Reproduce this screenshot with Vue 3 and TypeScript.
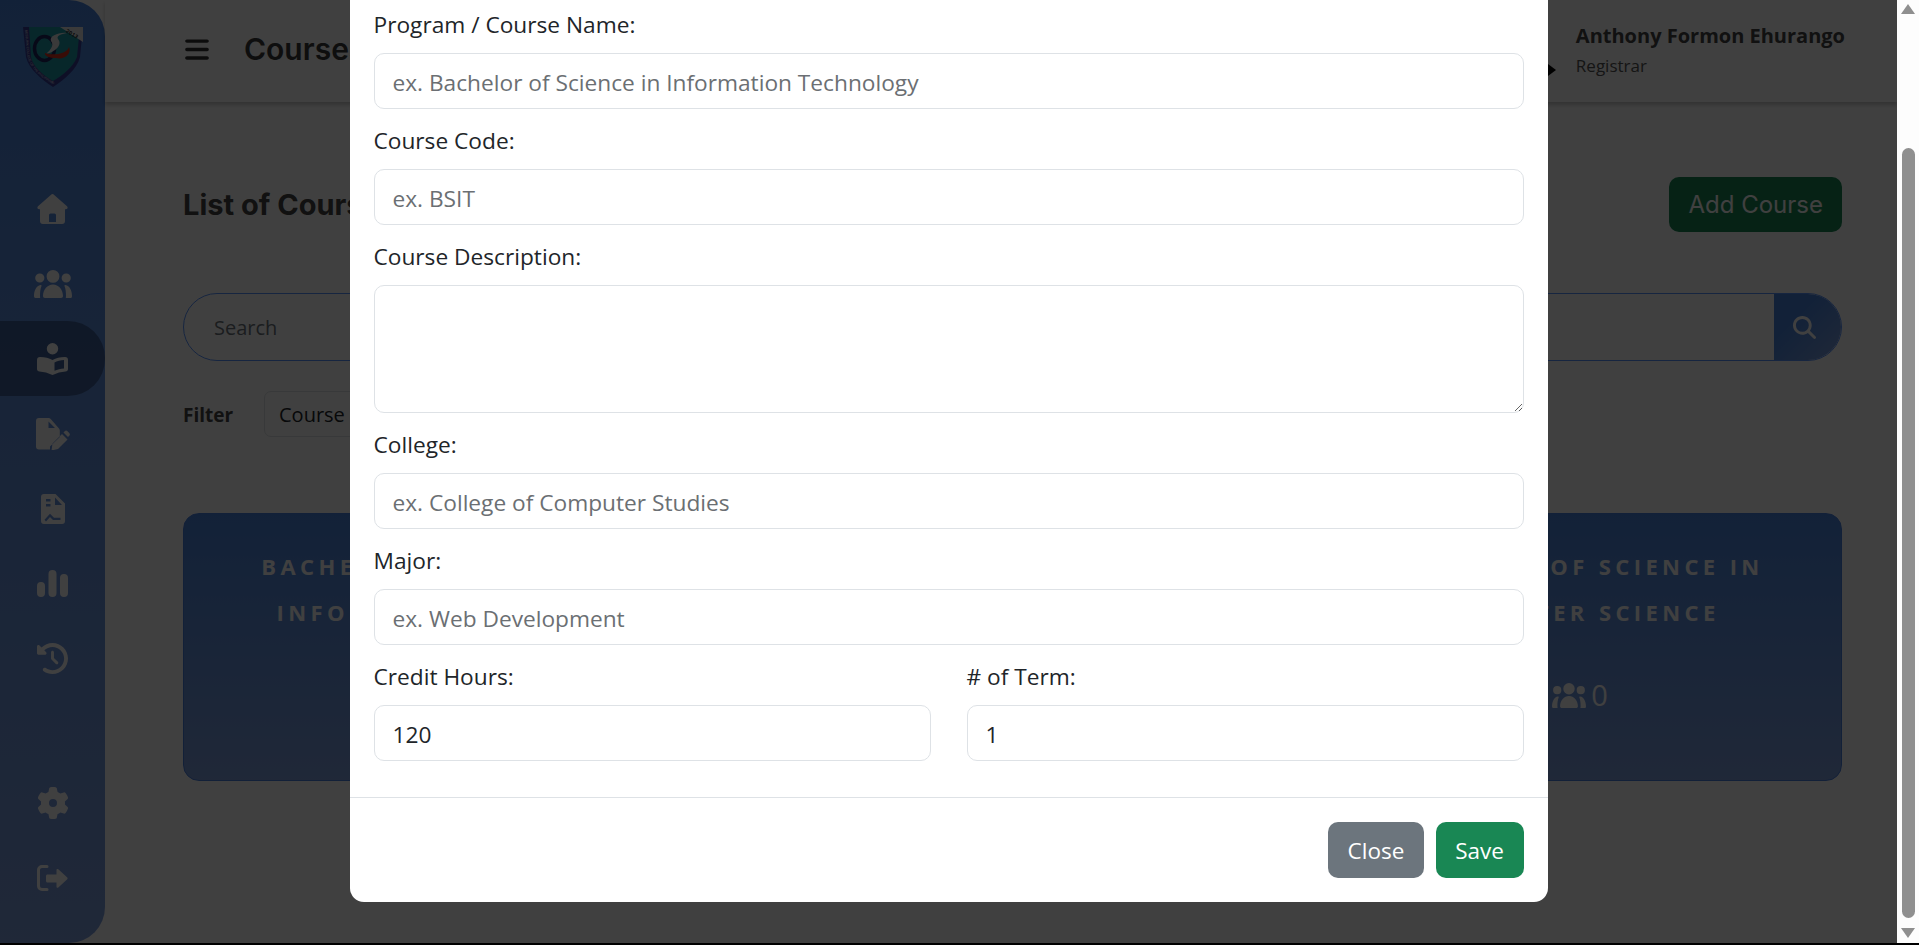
<script setup lang="ts">
import { ref } from "vue";

interface NavItem {
  name: string,
  box: string,
  w: number,
  h: number,
  d: string,
}

const navTop: NavItem[] = [
  {
    name: "home", box: "0 0 31 30", w: 31, h: 30,
    d: "M13.8 .9a2.5 2.5 0 0 1 3.4 0L30 12.3c1.2 1.1.5 3-1.1 3H28V27a3 3 0 0 1-3 3H6a3 3 0 0 1-3-3V15.3H2.1c-1.6 0-2.3-1.9-1.1-3ZM13.5 19.5a1.5 1.5 0 0 0-1.5 1.5v7h7v-7a1.5 1.5 0 0 0-1.5-1.5Z",
  },
  {
    name: "people", box: "0 0 38 28", w: 38, h: 28,
    d: "M19 0a6.4 6.4 0 1 1 0 12.800a6.400 6.400 0 1 1 0-12.800ZM5.800 3.400a4.600 4.600 0 1 1 0 9.200a4.600 4.600 0 1 1 0-9.200ZM32.200 3.400a4.600 4.600 0 1 1 0 9.200a4.600 4.600 0 1 1 0-9.200ZM9 26c0-6.500 4.500-11.500 10-11.500S29 19.500 29 26c0 1.200-.800 2-2 2H11c-1.200 0-2-.800-2-2ZM0 26c0-5.500 2.500-10.500 6.500-11 .800 0 1.200.300 1 1-1.200 3-1.500 6.500-1.500 10 0 1 .2 1.500.2 2H1.500C.5 28 0 27 0 26ZM38 26c0-5.500-2.500-10.500-6.500-11-.800 0-1.200.300-1 1 1.200 3 1.500 6.500 1.500 10 0 1-.2 1.500-.2 2h5.200C37.500 28 38 27 38 26Z",
  },
  {
    name: "reader", box: "0 0 31 32", w: 31, h: 32,
    d: "M15.500 0a5.700 5.700 0 1 1 0 11.400a5.700 5.700 0 1 1 0-11.400ZM3 14C8 14 12 15 15.500 17 19 15 23 14 28 14 30 14 31 15 31 17V26C31 27.500 30 28.500 28.500 28.500 24 28.800 20 30 15.500 32 11 30 7 28.800 2.500 28.500 1 28.500 0 27.500 0 26V17C0 15 1 14 3 14ZM17.500 19.500V27.800C20.500 26.500 23.500 25.800 27 25.500V17C23.500 17.300 20 18 17.500 19.500Z",
  },
  {
    name: "file-pen", box: "0 0 34 32", w: 34, h: 32,
    d: "M3 0H12.500a3 3 0 0 1 2.200 1L23 10.500a3 3 0 0 1 .8 2V19L14 28.500V31.500H3a3 3 0 0 1-3-3V3a3 3 0 0 1 3-3ZM12.500 3.400V10H19ZM16.500 25.500 26 16 31.500 21.500 22 31 15.500 32.500ZM27.500 14.500l1.200-1.200a2 2 0 0 1 2.800 0l1.700 1.700a2 2 0 0 1 0 2.800L32 19Z",
  },
  {
    name: "report", box: "0 0 24 30", w: 24, h: 30,
    d: "M3 0H14.500L24 9.500V27a3 3 0 0 1-3 3H3a3 3 0 0 1-3-3V3a3 3 0 0 1 3-3ZM5 5V7.500H9.500V5ZM5 10V12.500H9.500V10ZM14 3.500V11H21ZM3.500 25.800 9 19.700 13 23.800H19.500V26H12L9 23 5 27.500Z",
  },
  {
    name: "chart", box: "0 0 31 27", w: 31, h: 27,
    d: "M4 12a4 4 0 0 1 4 4v7a4 4 0 0 1-8 0v-7a4 4 0 0 1 4-4ZM15.500 0a4 4 0 0 1 4 4v19a4 4 0 0 1-8 0V4a4 4 0 0 1 4-4ZM27 4a4 4 0 0 1 4 4v15a4 4 0 0 1-8 0V8a4 4 0 0 1 4-4Z",
  },
  {
    name: "history", box: "0 0 512 512", w: 31, h: 31,
    d: "M75 75L41 41C25.900 25.900 0 36.600 0 57.900V168c0 13.300 10.700 24 24 24H134.100c21.400 0 32.100-25.900 17-41l-30.800-30.800C155 85.500 203 64 256 64c106 0 192 86 192 192s-86 192-192 192c-40.800 0-78.600-12.700-109.700-34.400c-14.500-10.100-34.400-6.600-44.600 7.900s-6.600 34.400 7.900 44.600C151.200 495 201.700 512 256 512c141.400 0 256-114.600 256-256S397.400 0 256 0C185.300 0 121.300 28.700 75 75zm181 53c-13.300 0-24 10.700-24 24V256c0 6.400 2.500 12.500 7 17l72 72c9.400 9.400 24.600 9.400 33.900 0s9.400-24.600 0-33.900l-65-65V152c0-13.300-10.700-24-24-24z",
  },
];

const gear = "M495.900 166.600c3.200 8.700 .5 18.400-6.400 24.600l-43.300 39.400c1.100 8.300 1.700 16.800 1.700 25.400s-.6 17.100-1.700 25.400l43.300 39.400c6.900 6.200 9.600 15.900 6.400 24.600c-4.400 11.900-9.700 23.300-15.800 34.300l-4.700 8.100c-6.600 11-14 21.400-22.100 31.200c-5.900 7.200-15.700 9.600-24.500 6.800l-55.700-17.700c-13.400 10.300-28.200 18.900-44 25.400l-12.500 57.100c-2 9.100-9 16.300-18.200 17.800c-13.800 2.300-28 3.500-42.500 3.500s-28.700-1.200-42.500-3.500c-9.200-1.500-16.200-8.700-18.200-17.800l-12.500-57.100c-15.800-6.500-30.600-15.100-44-25.400L83.100 425.900c-8.800 2.800-18.600 .3-24.500-6.800c-8.100-9.800-15.500-20.200-22.100-31.200l-4.700-8.100c-6.100-11-11.400-22.400-15.800-34.300c-3.200-8.700-.5-18.400 6.400-24.600l43.300-39.400C64.600 273.100 64 264.600 64 256s.6-17.100 1.700-25.400L22.400 191.200c-6.900-6.200-9.600-15.900-6.400-24.600c4.400-11.900 9.700-23.300 15.800-34.300l4.700-8.100c6.600-11 14-21.400 22.100-31.200c5.900-7.200 15.700-9.600 24.500-6.800l55.700 17.700c13.400-10.300 28.200-18.900 44-25.400l12.500-57.100c2-9.100 9-16.300 18.200-17.800C227.300 1.200 241.500 0 256 0s28.700 1.200 42.500 3.500c9.200 1.500 16.200 8.700 18.200 17.800l12.500 57.100c15.800 6.500 30.600 15.100 44 25.400l55.700-17.700c8.800-2.800 18.600-.3 24.500 6.800c8.100 9.800 15.500 20.200 22.100 31.200l4.700 8.100c6.100 11 11.400 22.400 15.800 34.300zM256 320a64 64 0 1 0 0-128 64 64 0 1 0 0 128z";

const cards = [
  { lines: ["BACHELOR OF SCIENCE IN", "INFORMATION SYSTEMS"], students: 0 },
  { lines: ["BACHELOR OF SCIENCE IN", "INFORMATION TECHNOLOGY"], students: 0 },
  { lines: ["BACHELOR OF SCIENCE IN", "COMPUTER SCIENCE"], students: 0 },
];

const peoplePath = navTop[1].d;

// The modal form
const fields = [
  { label: "Program / Course Name:", placeholder: "ex. Bachelor of Science in Information Technology" },
  { label: "Course Code:", placeholder: "ex. BSIT" },
];
const lowerFields = [
  { label: "College:", placeholder: "ex. College of Computer Studies" },
  { label: "Major:", placeholder: "ex. Web Development" },
];
const description = ref("");
const creditHours = ref("120");
const terms = ref("1");
</script>

<template>
  <div class="screen">
    <div class="window">
      <div class="page">
        <aside class="sidebar">
          <svg class="logo" viewBox="0 0 60 60" width="60" height="60">
            <path d="M0 0H60L57 30C54 42 42 52 30 60 18 52 6 42 3 30Z" fill="#3a3f96" />
            <path d="M6 0H57L54 30C50 40 40 48 30 54 20 48 10 40 8 30Z" fill="#1e9aa8" />
            <path d="M37 0H60V15Z" fill="#e8e8e8" />
            <text class="logo-year" transform="translate(44 2.500) rotate(31)" x="0" y="3">2013</text>
            <defs>
              <path id="logoEdge" d="M2 3 4.500 30C8 42 18 51 30 57 40 52 52 42 55 30L58 14" />
            </defs>
            <text class="logo-edge"><textPath href="#logoEdge">BESTLINK COLLEGE OF THE PHILIPPINES</textPath></text>
            <ellipse cx="21.500" cy="21.500" rx="10" ry="12" fill="none" stroke="#1e2560" stroke-width="3.500" />
            <path d="M44 6C36 5 26 9 28 14 32 19 26 24 23 27 32 25 40 18 35 12 33 9 38 7 44 6Z" fill="#e8e8e8" />
            <path d="M22 26C30 29 44 27 46 20 49 27 41 33 33 31 27 31 21 29 22 26Z" fill="#e0301e" />
          </svg>

          <nav class="nav">
            <a v-for="(item, i) in navTop" :key="item.name" class="nav-item" :class="{ active: i === 2 }">
              <svg :viewBox="item.box" :width="item.w" :height="item.h" fill-rule="evenodd">
                <path :d="item.d" fill="#fff" />
              </svg>
            </a>
          </nav>

          <nav class="nav nav-bottom">
            <a class="nav-item">
              <svg viewBox="0 0 512 512" width="32" height="32" fill-rule="evenodd">
                <path :d="gear" fill="#fff" />
              </svg>
            </a>
            <a class="nav-item">
              <svg viewBox="0 0 31 26" width="31" height="26">
                <path d="M10 1.500H5A3.500 3.500 0 0 0 1.500 5V21A3.500 3.500 0 0 0 5 24.500H10" fill="none" stroke="#fff" stroke-width="3" stroke-linecap="round" />
                <path d="M10.500 9.500H19.500V5C19.500 4 20.500 3.600 21.300 4.300L30 12.200C30.800 13 30.800 13.800 30 14.600L21.300 22.500C20.500 23.200 19.500 22.800 19.500 21.800V17.500H10.500C9.700 17.500 9 16.800 9 16V11C9 10.200 9.700 9.500 10.500 9.500Z" fill="#fff" />
              </svg>
            </a>
          </nav>
        </aside>

        <div class="main">
          <header class="topbar">
            <svg class="burger" viewBox="0 0 448 512" width="24" height="27">
              <path d="M0 96C0 78.300 14.300 64 32 64H416c17.700 0 32 14.300 32 32s-14.300 32-32 32H32C14.300 128 0 113.700 0 96zM0 256c0-17.700 14.300-32 32-32H416c17.700 0 32 14.300 32 32s-14.300 32-32 32H32c-17.700 0-32-14.300-32-32zM448 416c0 17.700-14.300 32-32 32H32c-17.700 0-32-14.300-32-32s14.300-32 32-32H416c17.700 0 32 14.300 32 32z" fill="#333" />
            </svg>
            <h1 class="top-title">Courses</h1>
            <div class="user">
              <svg class="caret" viewBox="0 0 10 12" width="10" height="12"><path d="M0 0 8 6 0 12Z" fill="#000" /></svg>
              <div class="user-text">
                <div class="user-name">Anthony Formon Ehurango</div>
                <div class="user-role">Registrar</div>
              </div>
            </div>
          </header>

          <section class="content">
            <div class="title-row">
              <h2>List of Courses</h2>
              <button class="add-btn">Add Course</button>
            </div>

            <div class="search">
              <input type="text" placeholder="Search" />
              <button class="search-btn">
                <svg viewBox="0 0 512 512" width="23" height="23">
                  <path d="M416 208c0 45.900-14.900 88.300-40 122.700L502.600 457.400c12.500 12.500 12.500 32.800 0 45.300s-32.800 12.500-45.300 0L330.700 376c-34.400 25.200-76.800 40-122.700 40C93.100 416 0 322.900 0 208S93.100 0 208 0S416 93.100 416 208zM208 352a144 144 0 1 0 0-288 144 144 0 1 0 0 288z" fill="#fff" />
                </svg>
              </button>
            </div>

            <div class="filter">
              <strong>Filter</strong>
              <select class="filter-select"><option>Course</option></select>
            </div>

            <div class="cards">
              <article v-for="card in cards" :key="card.lines[1]" class="card">
                <p v-for="line in card.lines" :key="line">{{ line }}</p>
                <div class="card-count">
                  <svg viewBox="0 0 38 28" width="34" height="25" fill-rule="evenodd"><path :d="peoplePath" fill="#fff" /></svg>
                  <span>{{ card.students }}</span>
                </div>
              </article>
            </div>
          </section>
        </div>

        <div class="backdrop">
          <form class="modal" @submit.prevent>
            <div class="modal-body">
              <div v-for="field in fields" :key="field.label" class="field">
                <label>{{ field.label }}</label>
                <input type="text" :placeholder="field.placeholder" />
              </div>
              <div class="field">
                <label>Course Description:</label>
                <textarea v-model="description"></textarea>
              </div>
              <div v-for="field in lowerFields" :key="field.label" class="field">
                <label>{{ field.label }}</label>
                <input type="text" :placeholder="field.placeholder" />
              </div>
              <div class="field-row">
                <div class="field">
                  <label>Credit Hours:</label>
                  <input v-model="creditHours" type="text" />
                </div>
                <div class="field">
                  <label># of Term:</label>
                  <input v-model="terms" type="text" />
                </div>
              </div>
            </div>
            <div class="modal-footer">
              <button type="button" class="btn btn-close">Close</button>
              <button type="submit" class="btn btn-save">Save</button>
            </div>
          </form>
        </div>
      </div>

      <div class="scrollbar">
        <svg viewBox="0 0 14 10" width="14" height="10"><path d="M7 0 14 10H0Z" fill="#8f8f8f" /></svg>
        <div class="thumb"></div>
        <svg viewBox="0 0 14 10" width="14" height="10"><path d="M0 0H14L7 10Z" fill="#8f8f8f" /></svg>
      </div>
    </div>
  </div>
</template>

<style scoped>
.screen {
  height: 945px;
  display: flex;
  flex-direction: column;
  overflow: hidden;
  font-family: "Open Sans", "Noto Sans", sans-serif;
  color: #212529;
}

.window {
  flex: 1;
  min-height: 0;
  display: flex;
  border-bottom: 2px solid #000;
}

.page {
  flex: 1;
  min-width: 0;
  position: relative;
  display: flex;
  background: #fff;
  overflow: hidden;
}

.sidebar {
  width: 105px;
  flex-shrink: 0;
  display: flex;
  flex-direction: column;
  padding-top: 27px;
  padding-bottom: 28px;
  box-sizing: border-box;
  border-radius: 0 36px 36px 0;
  background: linear-gradient(180deg, #4a85e0, #7f9fe0);
}

.logo {
  margin-left: 23px;
  flex-shrink: 0;
}

.logo-year {
  font: 700 5.500px "Liberation Sans", sans-serif;
  letter-spacing: .3px;
  fill: #222;
}

.logo-edge {
  font: 3.300px "Liberation Sans", sans-serif;
  fill: #d8d8e8;
}

.nav {
  display: flex;
  flex-direction: column;
  margin-top: 84px;
}

.nav-bottom {
  margin-top: auto;
}

.nav-item {
  height: 75px;
  display: flex;
  align-items: center;
  justify-content: center;
}

.nav-item.active {
  background: rgba(20, 30, 50, .4);
  border-radius: 0 37px 37px 0;
}

.main {
  flex: 1;
  min-width: 0;
  display: flex;
  flex-direction: column;
}

.topbar {
  height: 102px;
  flex-shrink: 0;
  display: flex;
  align-items: center;
  padding: 0 52px 0 80px;
  box-sizing: border-box;
  box-shadow: 0 3px 4px rgba(0, 0, 0, .22);
}

.burger {
  margin-top: -3px;
}

.top-title {
  margin: -4px 0 0 35px;
  font: 600 30px "Inter", sans-serif;
  color: #3a3a3a;
}

.user {
  margin-left: auto;
  display: flex;
  align-items: center;
  gap: 18px;
}

.caret {
  margin-top: 38px;
}

.user-name {
  font-size: 20px;
  font-weight: 700;
  line-height: 30px;
  color: #444;
}

.user-role {
  font-size: 17px;
  line-height: 30px;
  color: #555;
}

.content {
  flex: 1;
  display: flex;
  flex-direction: column;
  padding: 75px 55px 0 78px;
}

.title-row {
  height: 55px;
  display: flex;
  align-items: center;
  justify-content: space-between;
}

.title-row h2 {
  margin: 0;
  font: 700 29px "Inter", sans-serif;
  color: #444;
}

.add-btn {
  height: 55px;
  padding: 0 19px;
  border: none;
  border-radius: 10px;
  background: #198754;
  color: #fff;
  font: 24px "Inter", sans-serif;
}

.search {
  margin-top: 61px;
  height: 68px;
  display: flex;
  border: 1px solid #5a94ff;
  border-radius: 34px;
  overflow: hidden;
  box-sizing: border-box;
}

.search input {
  flex: 1;
  border: none;
  outline: none;
  background: transparent;
  padding: 0 30px;
  font: 20px "Open Sans", sans-serif;
}

.search input::placeholder {
  color: #6c757d;
}

.search-btn {
  width: 67px;
  border: none;
  display: flex;
  align-items: center;
  justify-content: center;
  padding: 0 6px 0 0;
  background: linear-gradient(135deg, #4a85e0 35%, #7f9fe0);
}

.filter {
  margin-top: 30px;
  display: flex;
  align-items: center;
  height: 46px;
  font-size: 19px;
}

.filter strong {
  width: 81px;
  margin-top: 2px;
  color: #444;
}

.filter-select {
  appearance: none;
  width: 400px;
  height: 46px;
  padding: 0 14px;
  border: 1px solid #dee2e6;
  border-radius: 7px;
  background: #fff;
  color: #212529;
  font: 20px "Open Sans", sans-serif;
}

.cards {
  margin-top: 76px;
  display: grid;
  grid-template-columns: repeat(3, 1fr);
  gap: 30px;
}

.card {
  height: 268px;
  padding-top: 29px;
  box-sizing: border-box;
  border-radius: 16px;
  border: 1px solid #4a80e0;
  background: linear-gradient(180deg, #4a85e0, #7f9fe0);
  color: #fff;
  text-align: center;
}

.card p {
  margin: 0;
  font-size: 22px;
  font-weight: 700;
  letter-spacing: 4.400px;
  line-height: 46px;
}

.card-count {
  margin: 40px 0 0 9px;
  display: flex;
  align-items: center;
  justify-content: center;
  gap: 5px;
  font-size: 29px;
  line-height: 40px;
}

.backdrop {
  position: absolute;
  inset: 0;
  display: flex;
  justify-content: center;
  align-items: flex-start;
  background: rgba(0, 0, 0, .75);
}

.modal {
  width: 1198px;
  background: #fff;
  border-radius: 0 0 14px 14px;
}

.modal-body {
  padding: 10px 24px 36px;
}

.field {
  margin-bottom: 17px;
}

.field label {
  display: block;
  margin-bottom: 13px;
  font-size: 22.700px;
  line-height: 30px;
}

.field input,
.field textarea {
  display: block;
  width: 100%;
  box-sizing: border-box;
  border: 1px solid #dee2e6;
  border-radius: 10px;
  padding: 2px 18px 0;
  outline: none;
  color: #212529;
  font: 22.700px "Open Sans", sans-serif;
}

.field input {
  height: 56px;
}

.field textarea {
  height: 128px;
  padding-top: 10px;
}

.field input::placeholder {
  color: #6b6f73;
}

.field-row {
  display: grid;
  grid-template-columns: 1fr 1fr;
  gap: 36px;
}

.field-row .field {
  margin-bottom: 0;
}

.modal-footer {
  display: flex;
  justify-content: flex-end;
  gap: 12px;
  padding: 24px;
  border-top: 1px solid #dee2e6;
}

.btn {
  height: 56px;
  padding: 0 19.500px;
  border: none;
  border-radius: 10px;
  color: #fff;
  font: 22.500px "Open Sans", sans-serif;
}

.btn-close {
  background: #6c757d;
}

.btn-save {
  background: #198754;
}

.scrollbar {
  width: 22px;
  flex-shrink: 0;
  display: flex;
  flex-direction: column;
  align-items: center;
  background: #fdfdfd;
  padding: 4px 0;
  box-sizing: border-box;
}

.thumb {
  width: 13px;
  height: 770px;
  margin: 134px 0 10px;
  border-radius: 7px;
  background: #8f8f8f;
}
</style>

<style>
body {
  margin: 0;
  overflow: hidden;
}
</style>
